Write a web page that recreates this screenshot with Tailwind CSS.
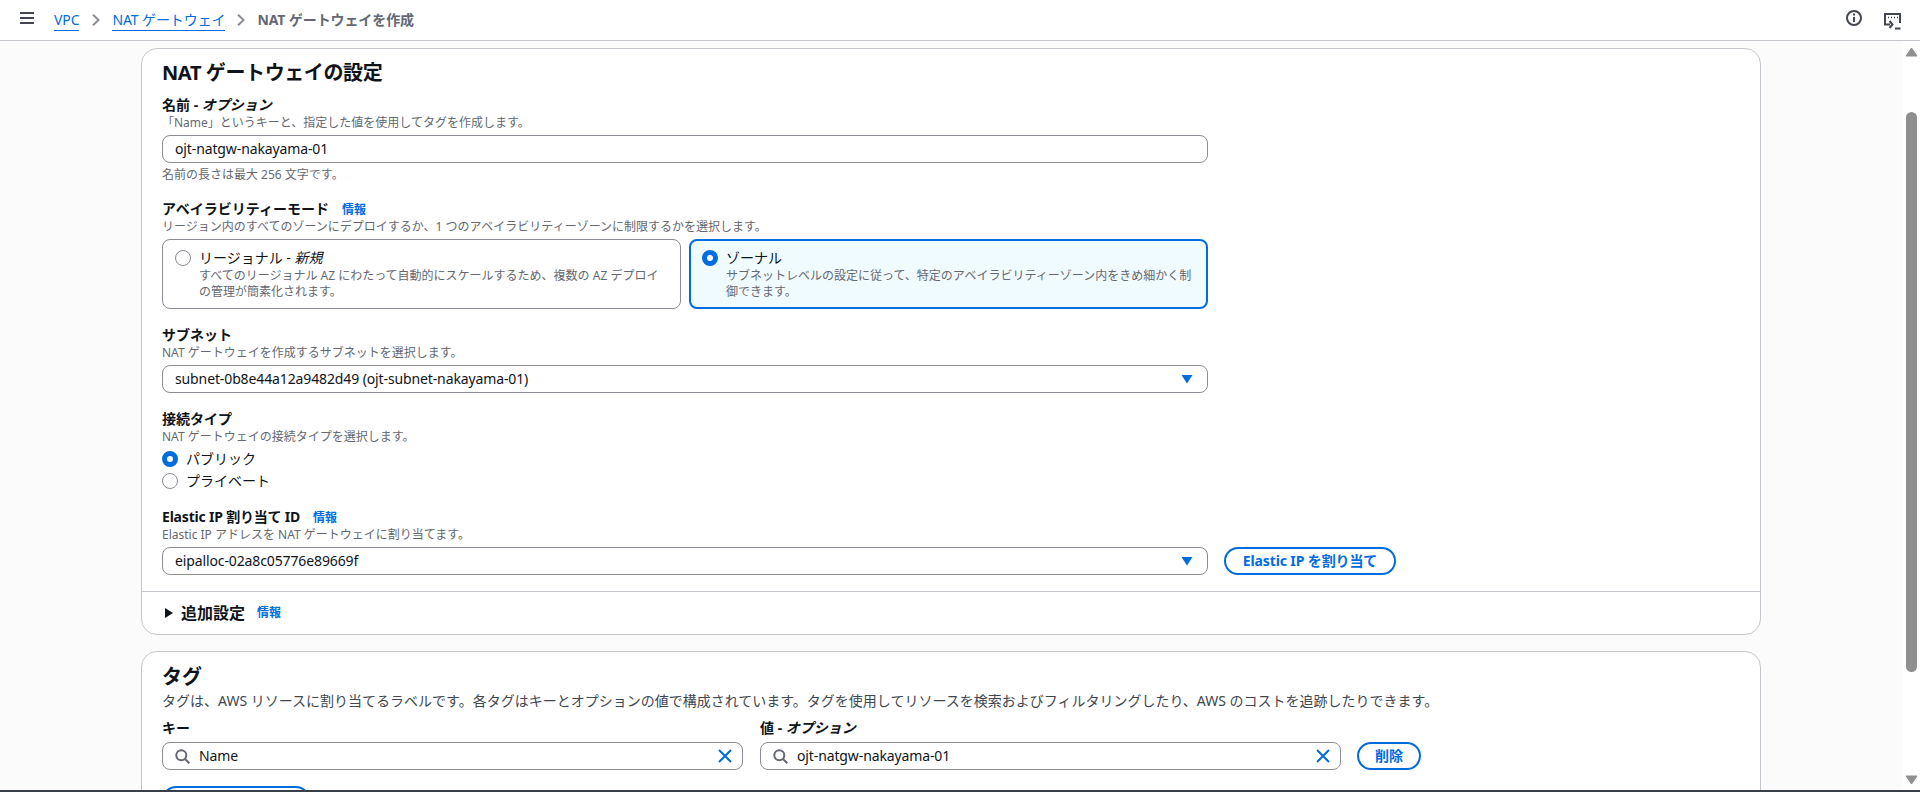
<!DOCTYPE html>
<html lang="ja">
<head>
    <meta charset="UTF-8">
    <meta name="viewport" content="width=device-width, initial-scale=1.0">
    <title>NAT ゲートウェイを作成</title>
    <script src="https://cdn.jsdelivr.net/npm/@tailwindcss/browser@4"></script>
</head>
<body class="h-[792px] overflow-hidden flex flex-col bg-[#fbfbfb] text-[#0f141a] text-sm font-['Noto_Sans','Noto_Sans_CJK_JP',sans-serif]">
    <!-- Top bar -->
    <header class="h-[41px] shrink-0 bg-white border-b border-[#c6c6cd] flex items-center pl-5 pr-[19px]">
        <svg class="w-[14px] h-[14px] mb-1 text-[#424650]" viewBox="0 0 14 14" fill="none" stroke="currentColor" stroke-width="2"><path d="M0 2h14M0 7h14M0 12h14"/></svg>
        <nav class="ml-5 flex items-center leading-5">
            <a class="text-[#006ce0] border-b border-[#006ce0] h-[21px] tracking-[-0.1px]">VPC</a>
            <svg class="w-2 h-3 ml-[13px] mr-3 text-[#8c8c94]" viewBox="0 0 8 12" fill="none" stroke="currentColor" stroke-width="2"><path d="M1 0.7L6.6 6L1 11.3"/></svg>
            <a class="text-[#006ce0] border-b border-[#006ce0] h-[21px] tracking-[-0.1px]">NAT ゲートウェイ</a>
            <svg class="w-2 h-3 ml-[12px] mr-3 text-[#8c8c94]" viewBox="0 0 8 12" fill="none" stroke="currentColor" stroke-width="2"><path d="M1 0.7L6.6 6L1 11.3"/></svg>
            <span class="font-bold text-[#656871] tracking-[-0.1px]">NAT ゲートウェイを作成</span>
        </nav>
        <div class="ml-auto flex items-center gap-[22px]">
            <svg class="w-4 h-4 mb-1 text-[#424650]" viewBox="0 0 16 16" fill="none" stroke="currentColor" stroke-width="2"><circle cx="8" cy="8" r="7"/><path d="M8 7v5"/><path d="M8 3.6v2"/></svg>
            <svg class="w-[17px] h-[17px] mt-[2px] text-[#424650]" viewBox="0 0 17 17" fill="none" stroke="currentColor" stroke-width="2"><path d="M6 11.5H1V1h15v9"/><path d="M4 4.5h1M7 4.5h1M10 4.5h1M13 4.5h1" stroke-width="1.5"/><path d="M5.5 8l3 3.5-3 3.5"/><path d="M11 15.5h5.5"/></svg>
        </div>
    </header>

    <div class="flex-1 min-h-0 flex">
        <main class="flex-1 min-w-0 overflow-hidden pl-[141px] pr-[141px] pt-[7px]">
            <!-- NAT gateway settings -->
            <section class="bg-white border border-[#c6c6cd] rounded-2xl">
                <div class="px-5 pt-[10px] pb-4">
                    <h2 class="text-xl leading-7 font-bold tracking-[-0.4px]">NAT ゲートウェイの設定</h2>

                    <div class="mt-2 w-[1046px]">
                        <label class="block font-bold leading-5">名前 - <i>オプション</i></label>
                        <p class="text-xs leading-4 text-[#656871]">「Name」というキーと、指定した値を使用してタグを作成します。</p>
                        <div class="mt-1 h-7 border border-[#8c8c94] rounded-lg bg-white px-3 flex items-center tracking-[-0.12px]">ojt-natgw-nakayama-01</div>
                        <p class="mt-1 text-xs leading-4 text-[#656871]">名前の長さは最大 256 文字です。</p>
                    </div>

                    <div class="mt-4 w-[1046px]">
                        <label class="block font-bold leading-5">アベイラビリティーモード<a class="ml-[13px] text-xs text-[#006ce0]">情報</a></label>
                        <p class="text-xs leading-4 text-[#656871]">リージョン内のすべてのゾーンにデプロイするか、1 つのアベイラビリティーゾーンに制限するかを選択します。</p>
                        <div class="mt-1 grid grid-cols-2 gap-2">
                            <div class="h-[70px] border border-[#8c8c94] rounded-lg px-3 py-2 flex gap-2">
                                <span class="mt-[2px] w-4 h-4 shrink-0 rounded-full border border-[#8c8c94] bg-white"></span>
                                <div>
                                    <div class="leading-5">リージョナル - <i>新規</i></div>
                                    <p class="text-xs leading-4 text-[#656871]">すべてのリージョナル AZ にわたって自動的にスケールするため、複数の AZ デプロイの管理が簡素化されます。</p>
                                </div>
                            </div>
                            <div class="h-[70px] border-2 border-[#006ce0] rounded-lg bg-[#f0fbff] px-[11px] py-[7px] flex gap-2">
                                <span class="mt-[2px] w-4 h-4 shrink-0 rounded-full border-[5px] border-[#006ce0] bg-white"></span>
                                <div>
                                    <div class="leading-5">ゾーナル</div>
                                    <p class="text-xs leading-4 text-[#656871]">サブネットレベルの設定に従って、特定のアベイラビリティーゾーン内をきめ細かく制御できます。</p>
                                </div>
                            </div>
                        </div>
                    </div>

                    <div class="mt-4 w-[1046px]">
                        <label class="block font-bold leading-5">サブネット</label>
                        <p class="text-xs leading-4 text-[#656871]">NAT ゲートウェイを作成するサブネットを選択します。</p>
                        <div class="mt-1 h-7 border border-[#8c8c94] rounded-lg bg-white pl-3 pr-[14px] flex items-center justify-between tracking-[-0.12px]">
                            subnet-0b8e44a12a9482d49 (ojt-subnet-nakayama-01)
                            <svg class="w-3 h-3 text-[#006ce0]" viewBox="0 0 12 12" fill="currentColor"><path d="M0.5 2h11L6 10.5z"/></svg>
                        </div>
                    </div>

                    <div class="mt-4">
                        <label class="block font-bold leading-5">接続タイプ</label>
                        <p class="text-xs leading-4 text-[#656871]">NAT ゲートウェイの接続タイプを選択します。</p>
                        <div class="mt-1 flex flex-col gap-[2px]">
                            <div class="h-5 flex items-center gap-2">
                                <span class="w-4 h-4 rounded-full border-[5px] border-[#006ce0] bg-white"></span>
                                パブリック
                            </div>
                            <div class="h-5 flex items-center gap-2">
                                <span class="w-4 h-4 rounded-full border border-[#8c8c94] bg-white"></span>
                                プライベート
                            </div>
                        </div>
                    </div>

                    <div class="mt-4">
                        <label class="block font-bold leading-5"><span class="tracking-[-0.2px]">Elastic IP 割り当て ID</span><a class="ml-[13px] text-xs text-[#006ce0]">情報</a></label>
                        <p class="text-xs leading-4 text-[#656871]">Elastic IP アドレスを NAT ゲートウェイに割り当てます。</p>
                        <div class="mt-1 flex gap-4">
                            <div class="w-[1046px] h-7 border border-[#8c8c94] rounded-lg bg-white pl-3 pr-[14px] flex items-center justify-between tracking-[-0.12px]">
                                eipalloc-02a8c05776e89669f
                                <svg class="w-3 h-3 text-[#006ce0]" viewBox="0 0 12 12" fill="currentColor"><path d="M0.5 2h11L6 10.5z"/></svg>
                            </div>
                            <button class="w-[172px] h-7 border-2 border-[#006ce0] rounded-full text-[#006ce0] font-bold tracking-[-0.12px]">Elastic IP を割り当て</button>
                        </div>
                    </div>
                </div>
                <div class="h-[43px] border-t border-[#c6c6cd] px-5 flex items-center">
                    <svg class="w-[10px] h-3 ml-[2px] text-[#0f141a]" viewBox="0 0 10 12" fill="currentColor"><path d="M1 1l8 5-8 5z"/></svg>
                    <span class="ml-[7px] text-base font-bold">追加設定</span>
                    <a class="ml-3 text-xs font-bold text-[#006ce0]">情報</a>
                </div>
            </section>

            <!-- Tags -->
            <section class="mt-4 bg-white border border-[#c6c6cd] rounded-2xl px-5 pt-[11px] pb-5">
                <h2 class="text-xl leading-7 font-bold">タグ</h2>
                <p class="leading-5 text-[#414750]">タグは、AWS リソースに割り当てるラベルです。各タグはキーとオプションの値で構成されています。タグを使用してリソースを検索およびフィルタリングしたり、AWS のコストを追跡したりできます。</p>
                <div class="mt-[7px] flex items-end">
                    <div class="w-[581px]">
                        <label class="block font-bold leading-5">キー</label>
                        <div class="mt-1 h-7 border border-[#8c8c94] rounded-lg bg-white pl-3 pr-[10px] flex items-center">
                            <svg class="w-[15px] h-[15px] text-[#656871]" viewBox="0 0 15 15" fill="none" stroke="currentColor" stroke-width="2"><circle cx="6.3" cy="6.3" r="5"/><path d="M10 10L14.3 14.3"/></svg>
                            <span class="ml-[9px] tracking-[-0.12px]">Name</span>
                            <svg class="ml-auto w-[14px] h-[14px] text-[#006ce0]" viewBox="0 0 14 14" fill="none" stroke="currentColor" stroke-width="2"><path d="M1 1l12 12M13 1L1 13"/></svg>
                        </div>
                    </div>
                    <div class="ml-[17px] w-[581px]">
                        <label class="block font-bold leading-5">値 - <i>オプション</i></label>
                        <div class="mt-1 h-7 border border-[#8c8c94] rounded-lg bg-white pl-3 pr-[10px] flex items-center">
                            <svg class="w-[15px] h-[15px] text-[#656871]" viewBox="0 0 15 15" fill="none" stroke="currentColor" stroke-width="2"><circle cx="6.3" cy="6.3" r="5"/><path d="M10 10L14.3 14.3"/></svg>
                            <span class="ml-[9px] tracking-[-0.12px]">ojt-natgw-nakayama-01</span>
                            <svg class="ml-auto w-[14px] h-[14px] text-[#006ce0]" viewBox="0 0 14 14" fill="none" stroke="currentColor" stroke-width="2"><path d="M1 1l12 12M13 1L1 13"/></svg>
                        </div>
                    </div>
                    <button class="ml-[16px] w-16 h-7 border-2 border-[#006ce0] rounded-full text-[#006ce0] font-bold">削除</button>
                </div>
                <button aria-label="新しいタグを追加" class="mt-4 w-[148px] h-7 border-2 border-[#006ce0] rounded-full"></button>
            </section>
        </main>

        <!-- Scrollbar -->
        <div class="w-[18px] shrink-0 bg-white flex flex-col items-center">
            <svg class="mt-[6px] w-[13px] h-[10px] text-[#8f8f8f]" viewBox="0 0 13 10" fill="currentColor" stroke="currentColor" stroke-linejoin="round"><path d="M6.5 1l5.5 8H1z"/></svg>
            <div class="mt-[55px] w-[11px] h-[560px] bg-[#8f8f8f] rounded-full"></div>
            <svg class="mt-[103px] w-[13px] h-[10px] text-[#8f8f8f]" viewBox="0 0 13 10" fill="currentColor" stroke="currentColor" stroke-linejoin="round"><path d="M6.5 9L1 1h11z"/></svg>
        </div>
    </div>
    <div class="h-[2px] shrink-0 bg-[#3a3f47]"></div>
</body>
</html>
